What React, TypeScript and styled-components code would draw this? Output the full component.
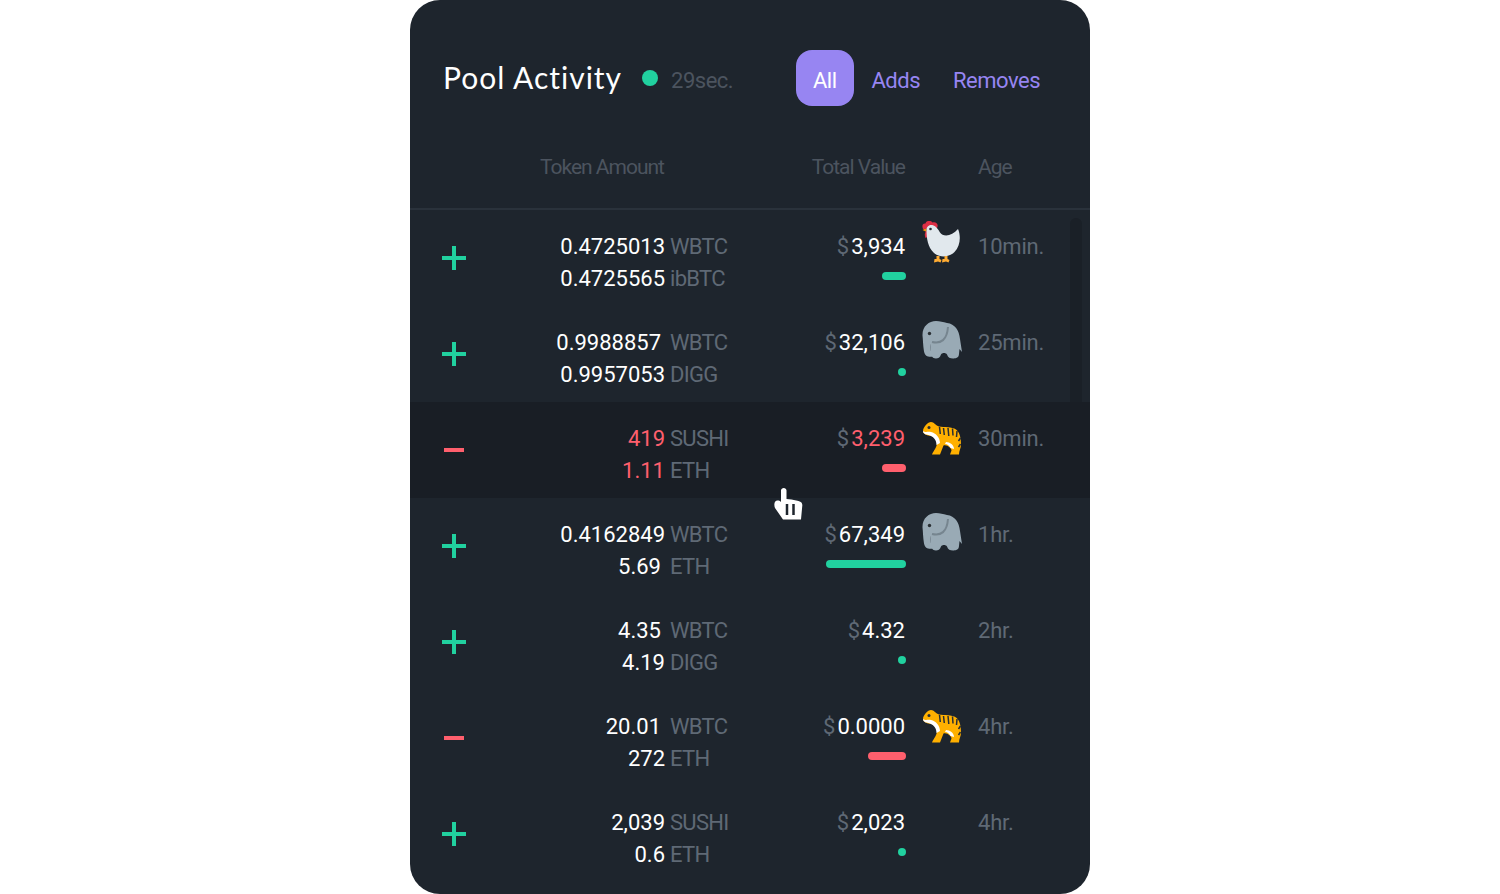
import React from 'react';
import styled, { createGlobalStyle } from 'styled-components';

type Animal = 'chicken' | 'elephant' | 'tiger';

interface AmountLine {
  value: string;
  token: string;
  inset?: boolean;
}

interface Activity {
  kind: 'add' | 'remove';
  lines: [AmountLine, AmountLine];
  total: string;
  barWidth: number;
  animal?: Animal;
  age: string;
  hovered?: boolean;
}

const GREEN = '#21d19f';
const RED = '#ff5f6d';
const PURPLE = '#9785f2';

const activity: Activity[] = [
  {
    kind: 'add',
    lines: [{ value: '0.4725013', token: 'WBTC' }, { value: '0.4725565', token: 'ibBTC' }],
    total: '3,934',
    barWidth: 24,
    animal: 'chicken',
    age: '10min.',
  },
  {
    kind: 'add',
    lines: [{ value: '0.9988857', token: 'WBTC', inset: true }, { value: '0.9957053', token: 'DIGG' }],
    total: '32,106',
    barWidth: 8,
    animal: 'elephant',
    age: '25min.',
  },
  {
    kind: 'remove',
    lines: [{ value: '419', token: 'SUSHI' }, { value: '1.11', token: 'ETH' }],
    total: '3,239',
    barWidth: 24,
    animal: 'tiger',
    age: '30min.',
    hovered: true,
  },
  {
    kind: 'add',
    lines: [{ value: '0.4162849', token: 'WBTC' }, { value: '5.69', token: 'ETH', inset: true }],
    total: '67,349',
    barWidth: 80,
    animal: 'elephant',
    age: '1hr.',
  },
  {
    kind: 'add',
    lines: [{ value: '4.35', token: 'WBTC', inset: true }, { value: '4.19', token: 'DIGG' }],
    total: '4.32',
    barWidth: 8,
    age: '2hr.',
  },
  {
    kind: 'remove',
    lines: [{ value: '20.01', token: 'WBTC', inset: true }, { value: '272', token: 'ETH' }],
    total: '0.0000',
    barWidth: 38,
    animal: 'tiger',
    age: '4hr.',
  },
  {
    kind: 'add',
    lines: [{ value: '2,039', token: 'SUSHI' }, { value: '0.6', token: 'ETH' }],
    total: '2,023',
    barWidth: 8,
    age: '4hr.',
  },
];

const GlobalStyle = createGlobalStyle`
  html, body {
    margin: 0;
    height: 894px;
    overflow: hidden;
    background: #fff;
  }
`;

const Card = styled.div`
  position: relative;
  width: 680px;
  height: 894px;
  margin: 0 auto;
  border-radius: 30px;
  overflow: hidden;
  background: #1e252d;
  font-family: Roboto, 'Liberation Sans', sans-serif;
  font-size: 22px;
  font-weight: 400;
  color: #fff;
`;

const Header = styled.div`
  display: flex;
  align-items: center;
  justify-content: space-between;
  padding: 50px 50px 0 33px;
`;

const TitleGroup = styled.div`
  display: flex;
  align-items: center;
`;

const Title = styled.h1`
  margin: 0 0 2px;
  font-family: Lato, sans-serif;
  font-size: 30px;
  font-weight: 400;
  letter-spacing: 1px;
`;

const LiveDot = styled.span`
  width: 16px;
  height: 16px;
  margin: 0 13px 0 20px;
  border-radius: 50%;
  background: ${GREEN};
`;

const Elapsed = styled.span`
  padding-top: 4px;
  letter-spacing: -0.5px;
  color: #4c545f;
`;

const Tabs = styled.div`
  display: flex;
  align-items: center;
`;

const Tab = styled.div<{ $active?: boolean; $gap?: number }>`
  height: 56px;
  box-sizing: border-box;
  padding: 4px ${(p) => (p.$active ? '17px' : '0')} 0;
  margin-left: ${(p) => p.$gap ?? 0}px;
  display: flex;
  align-items: center;
  border-radius: 16px;
  letter-spacing: -0.5px;
  color: ${(p) => (p.$active ? '#fff' : PURPLE)};
  background: ${(p) => (p.$active ? PURPLE : 'transparent')};
`;

const ColumnHeads = styled.div`
  display: grid;
  grid-template-columns: 255px 241px 72px 1fr;
  height: 104px;
  align-items: center;
  border-bottom: 2px solid #2a323b;
  box-sizing: border-box;
  font-size: 21px;
  letter-spacing: -1px;
  color: #4c545f;
`;

const HeadCell = styled.div<{ $right?: boolean; $col: number }>`
  grid-column: ${(p) => p.$col};
  text-align: ${(p) => (p.$right ? 'right' : 'left')};
  margin-right: ${(p) => (p.$right ? '1px' : '0')};
  margin-top: 20px;
`;

const RowList = styled.div``;

const Row = styled.div<{ $hovered?: boolean }>`
  display: grid;
  grid-template-columns: 88px 242px 166px 72px 1fr;
  height: 96px;
  box-sizing: border-box;
  padding-top: 21px;
  background: ${(p) => (p.$hovered ? '#191e25' : 'transparent')};
  position: relative;
  z-index: ${(p) => (p.$hovered ? 1 : 'auto')};
`;

const SignCell = styled.div`
  display: flex;
  justify-content: center;
  padding-top: 14px;
`;

const AmountCell = styled.div``;

const Line = styled.div`
  display: grid;
  grid-template-columns: 167px 75px;
  height: 32px;
  line-height: 32px;
`;

const Amount = styled.span<{ $negative: boolean; $inset?: boolean }>`
  text-align: right;
  padding-right: ${(p) => (p.$inset ? '4px' : '0')};
  color: ${(p) => (p.$negative ? RED : '#fff')};
`;

const Token = styled.span`
  padding-left: 5px;
  letter-spacing: -0.7px;
  color: #5f6975;
`;

const ValueCell = styled.div`
  display: flex;
  flex-direction: column;
  align-items: flex-end;
`;

const Total = styled.div<{ $negative: boolean }>`
  height: 32px;
  line-height: 32px;
  margin-right: 1px;
  color: ${(p) => (p.$negative ? RED : '#fff')};
`;

const Dollar = styled.span`
  margin-right: 2px;
  color: #5f6975;
`;

const Bar = styled.div<{ $negative: boolean }>`
  height: 8px;
  margin-top: 9px;
  border-radius: 4px;
  background: ${(p) => (p.$negative ? RED : GREEN)};
`;

const AnimalCell = styled.div`
  padding-left: 16px;
  margin-top: -10px;
`;

const AnimalIcon = styled.svg<{ $top: number }>`
  display: block;
  margin-top: ${(p) => p.$top}px;
`;

const Age = styled.div`
  height: 32px;
  line-height: 32px;
  letter-spacing: -0.2px;
  color: #5f6975;
`;

const Scrollbar = styled.div`
  position: absolute;
  left: 660px;
  top: 218px;
  width: 12px;
  height: 190px;
  border-radius: 6px 6px 0 0;
  background: #1a2027;
`;

const Pointer = styled.svg`
  position: absolute;
  left: 364px;
  top: 487px;
  z-index: 2;
`;

const Sign = ({ kind }: { kind: Activity['kind'] }) =>
  kind === 'add' ? (
    <svg width="26" height="26" viewBox="0 0 26 26">
      <path d="M13 1v24M1 13h24" stroke={GREEN} strokeWidth="4" fill="none" />
    </svg>
  ) : (
    <svg width="26" height="26" viewBox="0 0 26 26">
      <path d="M3 13h20" stroke={RED} strokeWidth="4" fill="none" />
    </svg>
  );

const Chicken = () => (
  <AnimalIcon $top={0} width="40" height="42" viewBox="0 0 40 42">
    <path d="M.500 9l4-2v4z" fill="#f4900c" />
    <path d="M4 10c-1.500 2-1.500 5-.5 7L7.500 15l-1-5z" fill="#dd2e44" />
    <path d="M1 8C-.5 4 1 2 3.500 2.500 4 -.5 9-1 10.500 1.500 14 .5 17 3 15 7L9 7.500z" fill="#dd2e44" />
    <path
      d="M4.500 9C4.500 5 8 3.500 11 4.300c3 .8 5 4 7 7.200 3 4.500 12 4 18-3.500 3 7 2.500 17-3.500 23-5.500 5.500-15.500 6-21 .5C6 26 4.500 18 4.500 9z"
      fill="#e1e8ed"
    />
    <circle cx="8.500" cy="8" r="1.300" fill="#292f33" />
    <path d="M14.500 35h3v3l2 1-1 2.500-2.500-1-4 1 .5-3.500h2zM22.500 35h3v3l2 1-1 2.500-2.500-1-4 1 .5-3.500h2z" fill="#ffac33" />
  </AnimalIcon>
);

const Elephant = () => (
  <AnimalIcon $top={4} width="41" height="38" viewBox="0 0 41 38">
    <path
      d="M.500 14C.500 5 7 0 14 0c4 0 7 1 11 2 8 1 12 7 13 16l2 13-2.500-3-.5 5c0 4-4 4.500-6 4.500-3 0-5-1-6-4-1-2-5-2-6 0-1 3-3 4-5 4-4 0-5-3-5-7l-1-8c0 4 1 10 3 13-4 1-8 0-9-5-1-6-1-12-1.500-16z"
      fill="#99aab5"
    />
    <path d="M10 21c9 2 15-2 16-15" stroke="#66757f" strokeWidth="2" fill="none" opacity="0.7" />
    <circle cx="7.500" cy="12.500" r="1.700" fill="#292f33" />
  </AnimalIcon>
);

const Tiger = () => (
  <AnimalIcon $top={8} width="41" height="34" viewBox="0 0 41 34">
    <path
      d="M1 10c0-4 5-9 8-9s5 3.500 8 4.500c5 1 13 0 17 3 4 3 5 9 5 15 0 4-2 6-2 10h-9l1.500-4c0-2-4-6-8-5l-3.500 9h-8c1.500-4 5-7 5-12 0-4-4-7-9-7-3-1-5-2-5-5z"
      fill="#ffb000"
    />
    <path
      d="M1 10c3 2 5 0 8 1 5 1 9 6 9 11l-3.500 2c0-6-4-9-8-10-3-.2-5.500-1.500-5.500-4zM24 21c4 0 8 3 8 7l-3.500-1c-1-2-3-4-5.500-4z"
      fill="#fff"
    />
    <circle cx="7" cy="6.500" r="1.500" fill="#292f33" />
    <path
      d="M17.500 6l.8 7M21.500 7l.8 7M26 7l.8 8M30.500 7.500l.5 7M35 10l-.5 6M38.500 17l-2 3M38.500 23l-2 3"
      stroke="#292f33"
      strokeWidth="1.500"
      fill="none"
    />
  </AnimalIcon>
);

const animals: Record<Animal, React.ReactNode> = {
  chicken: <Chicken />,
  elephant: <Elephant />,
  tiger: <Tiger />,
};

const App: React.FC = () => (
  <>
    <GlobalStyle />
    <Card>
      <Header>
        <TitleGroup>
          <Title>Pool Activity</Title>
          <LiveDot />
          <Elapsed>29sec.</Elapsed>
        </TitleGroup>
        <Tabs>
          <Tab $active>All</Tab>
          <Tab $gap={18}>Adds</Tab>
          <Tab $gap={33}>Removes</Tab>
        </Tabs>
      </Header>
      <ColumnHeads>
        <HeadCell $col={1} $right>Token Amount</HeadCell>
        <HeadCell $col={2} $right>Total Value</HeadCell>
        <HeadCell $col={4}>Age</HeadCell>
      </ColumnHeads>
      <Scrollbar />
      <RowList>
        {activity.map((item) => {
          const negative = item.kind === 'remove' && !!item.hovered;
          return (
            <Row key={item.lines[0].value} $hovered={item.hovered}>
              <SignCell>
                <Sign kind={item.kind} />
              </SignCell>
              <AmountCell>
                {item.lines.map((line) => (
                  <Line key={line.token}>
                    <Amount $negative={negative} $inset={line.inset}>{line.value}</Amount>
                    <Token>{line.token}</Token>
                  </Line>
                ))}
              </AmountCell>
              <ValueCell>
                <Total $negative={negative}>
                  <Dollar>$</Dollar>
                  {item.total}
                </Total>
                <Bar $negative={item.kind === 'remove'} style={{ width: item.barWidth }} />
              </ValueCell>
              <AnimalCell>{item.animal && animals[item.animal]}</AnimalCell>
              <Age>{item.age}</Age>
            </Row>
          );
        })}
      </RowList>
      <Pointer width="30" height="36" viewBox="0 0 30 36">
        <path
          d="M7 3.500c0-3.500 5.500-3.500 5.500 0V12l5 .5 7 1.500c3 .8 4 2.500 3.800 4.500L27 32.500H9L1 21c-1-2-1-6 1-7 1.500-.8 3.500-.5 5 1z"
          fill="#fff"
        />
        <path d="M13 17v11M19.500 17v11" stroke="#1e252d" strokeWidth="2.500" fill="none" />
      </Pointer>
    </Card>
  </>
);

export default App;
